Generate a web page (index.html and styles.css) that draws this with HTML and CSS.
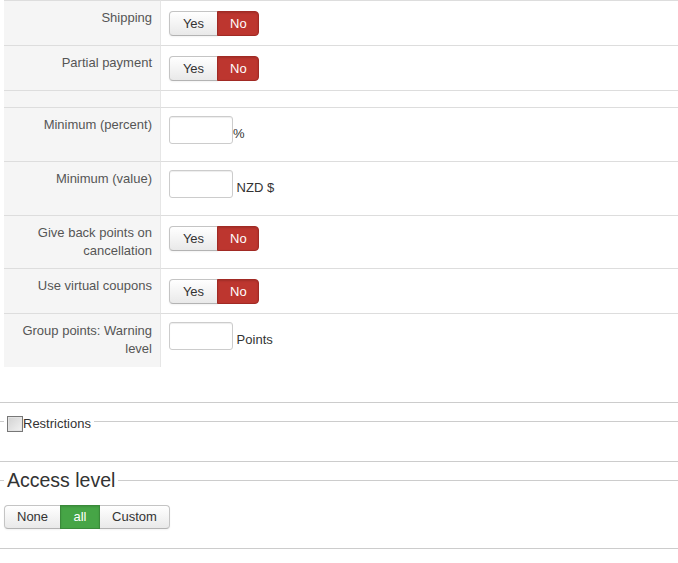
FILE: index.html
```html
<!DOCTYPE html>
<html lang="en">
<head>
<meta charset="utf-8">
<title>Points configuration</title>
<link rel="stylesheet" href="styles.css">
</head>
<body>
<fieldset class="options">
  <table class="admintable">
    <tr>
      <td class="key">Shipping</td>
      <td class="value">
        <div class="toggle">
          <button class="btn btn-yes">Yes</button><button class="btn btn-no active">No</button>
        </div>
      </td>
    </tr>
    <tr>
      <td class="key">Partial payment</td>
      <td class="value">
        <div class="toggle">
          <button class="btn btn-yes">Yes</button><button class="btn btn-no active">No</button>
        </div>
      </td>
    </tr>
    <tr class="spacer">
      <td class="key"></td>
      <td class="value"></td>
    </tr>
    <tr>
      <td class="key">Minimum (percent)</td>
      <td class="value"><input class="input-mini" type="text">%</td>
    </tr>
    <tr>
      <td class="key">Minimum (value)</td>
      <td class="value"><input class="input-mini" type="text"> NZD $</td>
    </tr>
    <tr>
      <td class="key">Give back points on cancellation</td>
      <td class="value">
        <div class="toggle">
          <button class="btn btn-yes">Yes</button><button class="btn btn-no active">No</button>
        </div>
      </td>
    </tr>
    <tr>
      <td class="key">Use virtual coupons</td>
      <td class="value">
        <div class="toggle">
          <button class="btn btn-yes">Yes</button><button class="btn btn-no active">No</button>
        </div>
      </td>
    </tr>
    <tr>
      <td class="key">Group points: Warning level</td>
      <td class="value"><input class="input-mini" type="text"> Points</td>
    </tr>
  </table>
</fieldset>

<fieldset class="section restrictions">
  <legend class="check-legend">
    <input class="check" type="checkbox" id="restrictions"><label for="restrictions">Restrictions</label>
  </legend>
</fieldset>

<fieldset class="section access">
  <legend class="big-legend">Access level</legend>
  <div class="toggle toggle-access">
    <button class="btn btn-none">None</button><button class="btn btn-all active">all</button><button class="btn btn-custom">Custom</button>
  </div>
</fieldset>
</body>
</html>
```

FILE: styles.css
```css
html, body {
  margin: 0;
  padding: 0;
  background: #fff;
}

body {
  font-family: "Liberation Sans", Arial, sans-serif;
  font-size: 13px;
  line-height: 18px;
  color: #333;
}

fieldset {
  margin: 0;
  padding: 0;
  border: 0;
  min-width: 0;
}

/* options table block */
.options {
  padding: 0 0 35px 4px;
  border-bottom: 1px solid #ccc;
}

.admintable {
  width: 100%;
  border-collapse: separate;
  border-spacing: 0;
}

.admintable td {
  vertical-align: top;
  padding: 8px;
  border-top: 1px solid #ddd;
}

.admintable td.key {
  width: 140px;
  text-align: right;
  color: #555;
  background: #f5f5f5;
  border-right: 1px solid #e6e6e6;
}

.admintable td.value {
  color: #333;
}

/* yes/no button groups */
.toggle {
  display: flex;
  margin: 2px 0 1px;
}

.btn {
  box-sizing: border-box;
  height: 25px;
  padding: 0 12px;
  margin: 0;
  font-family: inherit;
  font-size: 13px;
  line-height: 23px;
  text-align: center;
  color: #333;
  background: linear-gradient(#ffffff, #e9e9e9);
  border: 1px solid #c4c4c4;
  border-bottom-color: #b3b3b3;
  border-radius: 0;
  box-shadow: inset 0 1px 0 rgba(255, 255, 255, 0.3), 0 1px 2px rgba(0, 0, 0, 0.05);
  cursor: pointer;
}

.btn + .btn {
  margin-left: -1px;
}

.btn:first-child {
  border-radius: 4px 0 0 4px;
}

.btn:last-child {
  border-radius: 0 4px 4px 0;
}

.btn-yes {
  width: 49px;
}

.btn-no {
  width: 42px;
}

.btn-no.active {
  color: #fff;
  background: #bd362f;
  border-color: #a12a24;
  box-shadow: inset 0 1px 2px rgba(0, 0, 0, 0.15);
}

.btn-none {
  width: 57px;
}

.btn-all {
  width: 40px;
}

.btn-custom {
  width: 71px;
}

.btn-all.active {
  position: relative;
  z-index: 1;
  color: #fff;
  background: #46a546;
  border-color: #3a8a3a;
  box-shadow: inset 0 1px 2px rgba(0, 0, 0, 0.12);
}

/* small text inputs */
.input-mini {
  box-sizing: border-box;
  width: 64px;
  height: 28px;
  margin: 0 0 9px;
  padding: 4px 6px;
  vertical-align: middle;
  font-family: inherit;
  font-size: 13px;
  border: 1px solid #ccc;
  border-radius: 3px;
  box-shadow: inset 0 1px 1px rgba(0, 0, 0, 0.075);
  background: #fff;
}

/* lower sections with legends */
.section {
  border-top: 1px solid #ccc;
  border-bottom: 1px solid #ccc;
}

.restrictions {
  margin-top: 8px;
  padding-bottom: 30px;
}

.check-legend {
  display: flex;
  align-items: flex-start;
  height: 20px;
  margin-left: 4px;
  padding: 0 3px;
}

.check {
  appearance: none;
  -webkit-appearance: none;
  box-sizing: border-box;
  width: 16px;
  height: 16px;
  margin: 5px 0 0;
  border: 1px solid #777;
  background: linear-gradient(135deg, #d2d2d2, #f2f2f2);
  box-shadow: inset 0 0 0 1px #e4e4e4;
}

.check-legend label {
  margin-top: 4px;
  line-height: 18px;
  color: #333;
}

.access {
  margin-top: 6px;
  padding-bottom: 19px;
}

.big-legend {
  margin-left: 4px;
  padding: 0 3px;
  font-size: 19.5px;
  line-height: 24px;
  color: #333;
}

.toggle-access {
  margin: 13px 0 0 4px;
}

.toggle-access .btn {
  height: 24px;
  line-height: 22px;
}
```
